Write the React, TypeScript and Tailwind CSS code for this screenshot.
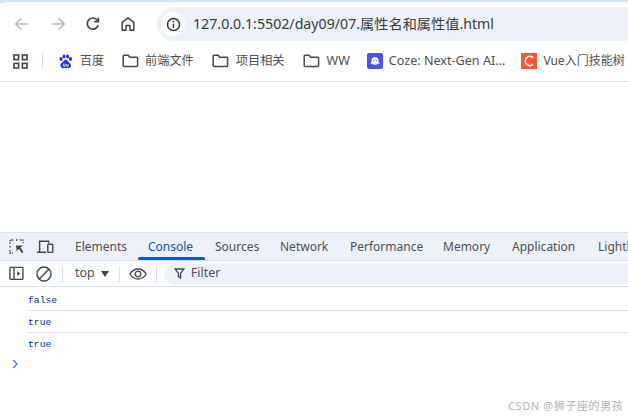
const ui = { fontFamily: '"Noto Sans","Noto Sans CJK SC",sans-serif' };

function Folder() {
  return (
    <svg width="17" height="14" viewBox="0 0 17 14" fill="none" stroke="#474747" strokeWidth="1.5" className="shrink-0">
      <path d="M1.2 2.2a1 1 0 0 1 1-1h4l1.6 2h6.8a1 1 0 0 1 1 1v7.4a1 1 0 0 1-1 1H2.2a1 1 0 0 1-1-1z" />
    </svg>
  );
}

function Bookmark({ icon, label, cls, text = 'text-[12px]' }: { icon: React.ReactNode; label: string; cls: string; text?: string }) {
  return (
    <div className={`flex items-center whitespace-nowrap ${cls}`}>
      {icon}
      <span className={`${text} leading-none text-[#505050]`}>{label}</span>
    </div>
  );
}

function Sep({ cls }: { cls: string }) {
  return <div className={`w-px h-[16px] bg-[#d3e3fd] shrink-0 ${cls}`} />;
}

export default function App() {
  const tabs: [string, string][] = [
    ['Elements', 'ml-[12px] w-[52px]'],
    ['Console', 'ml-[21px] w-[46px]'],
    ['Sources', 'ml-[21px] w-[45px]'],
    ['Network', 'ml-[20px] w-[50px]'],
    ['Performance', 'ml-[20px] w-[73px]'],
    ['Memory', 'ml-[20px] w-[49px]'],
    ['Application', 'ml-[20px] w-[66px]'],
    ['Lighthouse', 'ml-[20px] w-[60px]'],
  ];
  return (
    <div className="relative w-[628px] h-[417px] overflow-hidden bg-white" style={ui}>
      <div className="h-[3px] bg-[#d3e3fd]" />
      <div className="h-[39px] flex items-center bg-white -mt-[1px] rounded-tl-[8px]">
        <svg width="16" height="16" viewBox="0 0 16 16" fill="none" stroke="#b9b9b9" strokeWidth="1.6" className="ml-[14px] mt-[5px] shrink-0">
          <path d="M14.5 8H2M7.5 2.2 1.8 8l5.700 5.800" />
        </svg>
        <svg width="16" height="16" viewBox="0 0 16 16" fill="none" stroke="#b9b9b9" strokeWidth="1.6" className="ml-[20px] mt-[5px] shrink-0">
          <path d="M1.500 8H14M8.500 2.200 14.200 8l-5.700 5.800" />
        </svg>
        <svg width="16" height="16" viewBox="0 0 16 16" fill="none" stroke="#474747" strokeWidth="1.7" className="ml-[19px] mt-[5px] shrink-0">
          <path d="M13.2 9.3A5.600 5.600 0 1 1 12.600 4.600" />
          <path d="M13.4 1.400v4.200H9.200" />
        </svg>
        <svg width="16" height="16" viewBox="0 0 16 16" fill="none" stroke="#474747" strokeWidth="1.5" className="ml-[19px] mt-[5px] shrink-0">
          <path d="M2.200 14.200V6.400L8 1.800l5.800 4.600v7.800H10V9.400H6v4.800z" strokeLinejoin="round" />
        </svg>
        <div className="ml-[21px] self-end h-[34px] flex-1 flex items-center bg-[#ecf1fa] rounded-l-[17px] min-w-0">
          <div className="ml-[4px] w-[24px] h-[24px] rounded-full bg-white flex items-center justify-center shrink-0">
            <svg width="15" height="15" viewBox="0 0 15 15" fill="none" stroke="#303030" strokeWidth="1.5">
              <circle cx="7.500" cy="7.500" r="6" />
              <path d="M7.500 6.600v4.200" />
              <path d="M7.500 3.700v1.700" />
            </svg>
          </div>
          <span className="ml-[8px] text-[14.2px] leading-none text-[#3a3c40] whitespace-nowrap">127.0.0.1:5502/day09/07.属性名和属性值.html</span>
        </div>
      </div>
      <div className="h-[41px] flex items-center border-b border-[#e3e3e3]">
        <svg width="15" height="15" viewBox="0 0 15 15" fill="none" stroke="#474747" strokeWidth="1.6" className="ml-[13px] shrink-0">
          <rect x="1" y="1" width="4.600" height="4.600" />
          <rect x="9.400" y="1" width="4.600" height="4.600" />
          <rect x="1" y="9.400" width="4.600" height="4.600" />
          <rect x="9.400" y="9.400" width="4.600" height="4.600" />
        </svg>
        <div className="ml-[14px] w-px h-[16px] bg-[#c6dafc]" />
        <Bookmark
          cls="ml-[15px] gap-[7px]"
          label="百度"
          icon={
            <svg width="15" height="15" viewBox="0 0 15 15" fill="#2932e1" className="shrink-0">
              <ellipse cx="3" cy="5" rx="1.600" ry="2" />
              <ellipse cx="6" cy="2.500" rx="1.500" ry="2" />
              <ellipse cx="9.600" cy="2.500" rx="1.500" ry="2" />
              <ellipse cx="12.500" cy="5" rx="1.600" ry="2" />
              <path d="M7.600 5.800c-1.700 0-2.200 1.800-3.400 2.800-1.200.9-2 1.900-1.700 3.400.3 1.800 2.100 2.400 3.200 2.100 1.100-.2 2.800-.3 4 0 1.400.4 3.200-.5 3.300-2.300.1-1.500-.9-2.400-2-3.300-1.200-1-1.700-2.700-3.400-2.700z" />
              <path d="M5.600 9.800v2.200c0 .8 1.500.8 1.500 0V9.800M8.600 10v2.200c0 .8 1.600.8 1.600 0V10" stroke="#fff" strokeWidth=".8" fill="none" />
            </svg>
          }
        />
        <Bookmark cls="ml-[18px] gap-[6px]" text="text-[12.2px]" label="前端文件" icon={<Folder />} />
        <Bookmark cls="ml-[18px] gap-[7px]" text="text-[12.2px]" label="项目相关" icon={<Folder />} />
        <Bookmark cls="ml-[18px] gap-[7px]" text="text-[12.5px]" label="WW" icon={<Folder />} />
        <Bookmark
          cls="ml-[17px] gap-[6px]"
          text="text-[12.6px]"
          label="Coze: Next-Gen AI..."
          icon={
            <div className="w-[16px] h-[16px] rounded-[2px] bg-[#4d53e8] flex items-center justify-center shrink-0">
              <svg width="12" height="12" viewBox="0 0 12 12" fill="#fff">
                <path d="M2.500 5.500a3.500 3.500 0 0 1 7 0v1.700l1.300 1.600H8.600C7.400 10.200 4.600 10.200 3.400 8.800H1.200l1.300-1.600z" />
                <circle cx="4.700" cy="5.600" r=".6" fill="#4d53e8" />
                <circle cx="7.300" cy="5.600" r=".6" fill="#4d53e8" />
              </svg>
            </div>
          }
        />
        <Bookmark
          cls="ml-[16px] gap-[6px]"
          label="Vue入门技能树"
          icon={
            <div className="w-[16px] h-[16px] bg-[#fc5531] flex items-center justify-center shrink-0">
              <svg width="12" height="12" viewBox="0 0 12 12" fill="none" stroke="#fff" strokeWidth="1.7">
                <path d="M10 2.600A4.600 4.600 0 1 0 10 9.400" />
              </svg>
            </div>
          }
        />
      </div>
      <div className="h-[150px]" />
      <div className="h-[29px] flex items-stretch bg-[#edf1fa] border-y border-[#d3e3fd] overflow-hidden">
        <svg width="16" height="16" viewBox="0 0 16 16" fill="none" stroke="#474747" strokeWidth="1.3" className="ml-[9px] self-center shrink-0">
          <path d="M1 5V1h4M7 1h2M11 1h3v3M1 7v2M1 11v3h3" strokeDasharray="1.500 1" />
          <path d="M7 6.500h7l-2.600 2.200 3.100 4.300-1.600 1.200-3-4.300L7.700 12z" fill="#474747" stroke="none" />
        </svg>
        <svg width="17" height="15" viewBox="0 0 17 15" fill="none" stroke="#474747" strokeWidth="1.4" className="ml-[12px] self-center shrink-0">
          <path d="M0 13.200h9M2.600 13V2.200h9v2" />
          <rect x="10.800" y="5.200" width="5" height="8.200" rx=".8" />
        </svg>
        <div className="ml-[9px] w-px h-[16px] bg-[#d3e3fd] self-center" />
        {tabs.map(([t, c]) => (
          <div key={t} className={`relative shrink-0 flex items-center h-full ${c}`}>
            <span className={`text-[12px] leading-none whitespace-nowrap ${t === 'Console' ? 'text-[#0b57d0]' : 'text-[#505050]'}`}>{t}</span>
            {t === 'Console' && <div className="absolute -left-[10px] -right-[11px] bottom-0 h-[3px] rounded-t-[2px] bg-[#0b57d0]" />}
          </div>
        ))}
      </div>
      <div className="h-[26px] flex items-center bg-white border-b border-[#d3e3fd]">
        <svg width="15" height="15" viewBox="0 0 15 15" fill="none" stroke="#474747" strokeWidth="1.4" className="ml-[9px] shrink-0">
          <rect x=".9" y="1.400" width="13" height="12" rx="1" />
          <path d="M5 1.400v12" />
          <path d="M8.200 5v5l3-2.500z" fill="#474747" stroke="none" />
        </svg>
        <svg width="16" height="16" viewBox="0 0 16 16" fill="none" stroke="#474747" strokeWidth="1.4" className="ml-[12px] shrink-0">
          <circle cx="8" cy="8" r="7" />
          <path d="M3.200 13 13 3" />
        </svg>
        <Sep cls="ml-[10px]" />
        <span className="ml-[12px] text-[12.5px] leading-none text-[#505050]">top</span>
        <svg width="8" height="6" viewBox="0 0 8 6" fill="#474747" className="ml-[6px] shrink-0">
          <path d="M0 0h8L4 6z" />
        </svg>
        <Sep cls="ml-[10px]" />
        <svg width="18" height="12" viewBox="0 0 18 12" fill="none" stroke="#474747" strokeWidth="1.3" className="ml-[9px] shrink-0">
          <path d="M.8 6C3 2.600 5.800 1 9 1s6 1.600 8.200 5C15 9.400 12.200 11 9 11S3 9.400.8 6z" />
          <circle cx="9" cy="6" r="2.800" />
        </svg>
        <Sep cls="ml-[9px]" />
        <div className="ml-[7px] flex-1 h-[20px] flex items-center bg-[#ecf1fa] rounded-l-[10px]">
          <svg width="11" height="11" viewBox="0 0 11 11" fill="none" stroke="#474747" strokeWidth="1.3" className="ml-[10px] shrink-0">
            <path d="M1 1h9L6.600 5.200V10L4.400 8.600V5.200z" />
          </svg>
          <span className="ml-[6px] text-[12.5px] leading-none text-[#505050]">Filter</span>
        </div>
      </div>
      <div className="pl-[28px] text-[9.7px] text-[#00308f]" style={{ fontFamily: '"Liberation Mono",monospace' }}>
        <div className="h-[24px] flex items-center pt-[6px] border-b border-[#d3e3fd]">false</div>
        <div className="h-[22px] flex items-center pt-[3px] border-b border-[#d3e3fd]">true</div>
        <div className="h-[22px] flex items-center pt-[2px]">true</div>
      </div>
      <svg width="7" height="10" viewBox="0 0 7 10" fill="none" stroke="#4285f4" strokeWidth="1.4" className="ml-[12px] mt-[4px]">
        <path d="M1.200 1 5 5 1.200 9" />
      </svg>
      <div className="absolute left-[508px] top-[400px] text-[11px] leading-none tracking-[0.6px] text-[#b4b4b4] whitespace-nowrap">CSDN @狮子座的男孩</div>
    </div>
  );
}
